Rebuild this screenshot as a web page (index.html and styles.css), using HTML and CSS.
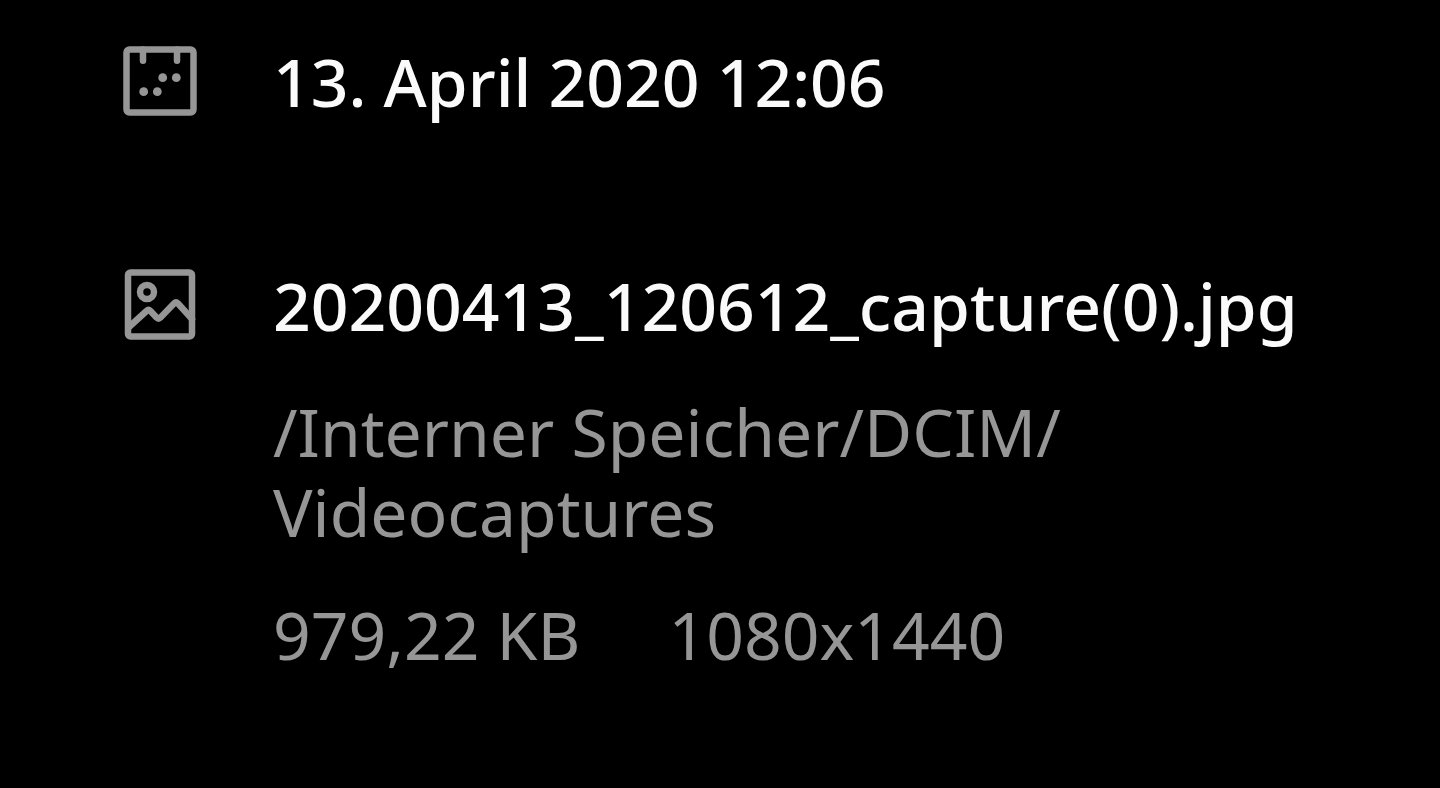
FILE: index.html
```html
<!DOCTYPE html>
<html lang="de">
<head>
<meta charset="utf-8">
<meta name="viewport" content="width=device-width, initial-scale=1">
<title>Details</title>
<link rel="stylesheet" href="styles.css">
</head>
<body>
<main class="details">
  <section class="entry">
    <svg class="icon" viewBox="0 0 76 76" aria-hidden="true">
      <rect x="4.5" y="6.5" width="67" height="63" rx="3" class="line"/>
      <path d="M21 6.500V17.700M55 6.500V17.700" class="line"/>
      <g class="dot"><circle cx="40.700" cy="34.700" r="4.400"/><circle cx="54.300" cy="34.700" r="4.400"/><circle cx="21.700" cy="48.700" r="4.400"/><circle cx="35.300" cy="48.700" r="4.400"/></g>
    </svg>
    <h1 class="title">13. April 2020 12:06</h1>
  </section>
  <section class="entry">
    <svg class="icon" viewBox="0 0 76 76" aria-hidden="true">
      <rect x="6" y="5.5" width="64" height="64" rx="2.500" class="line"/>
      <circle cx="25" cy="25" r="7" class="line"/>
      <path d="M7 60L24.500 44Q26.500 42 28.500 44L34.500 50.500Q36.500 52.500 38.500 50.500L52 36.500Q54 34.500 56 36.500L70 52" class="line"/>
    </svg>
    <div class="info">
      <h2 class="title">20200413_120612_capture(0).jpg</h2>
      <p class="path">/Interner Speicher/DCIM/<wbr>Videocaptures</p>
      <p class="facts"><span>979,22 KB</span><span>1080x1440</span></p>
    </div>
  </section>
</main>
</body>
</html>
```
FILE: styles.css
```css
* { box-sizing: border-box; }
body {
  margin: 0;
  background: #000;
  color: #969696;
  font-family: "Noto Sans", sans-serif;
  font-size: 66px;
  line-height: 80px;
}
.details {
  display: flex;
  flex-direction: column;
  gap: 144px;
  padding: 41px 80px 80px 122px;
}
.entry { display: flex; align-items: flex-start; gap: 75px; }
.icon { flex: none; width: 76px; height: 76px; margin-top: 2px; }
.line { fill: none; stroke: #969696; stroke-width: 6.5; stroke-linecap: round; stroke-linejoin: round; }
.dot { fill: #969696; }
.title { margin: 0; color: #fafafa; font-size: 66px; font-weight: 500; white-space: nowrap; }
.path { margin: 46px 0 0; max-width: 900px; }
.facts { display: flex; gap: 88px; margin: 43px 0 0; }
```
